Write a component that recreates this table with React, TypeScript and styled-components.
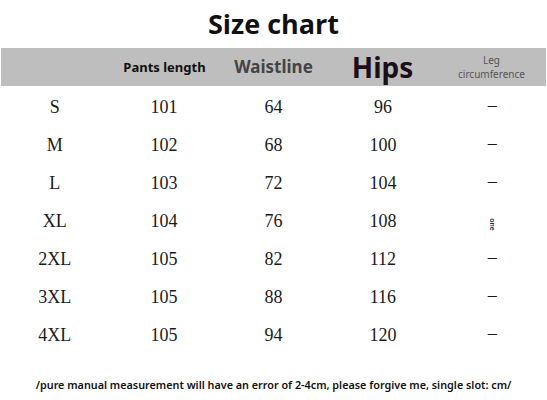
import styled, { createGlobalStyle } from 'styled-components'

const GlobalStyle = createGlobalStyle`
  html, body {
    margin: 0;
    padding: 0;
    background: #fff;
  }
`

const sizes = [
  { size: 'S', pants: 101, waist: 64, hips: 96, leg: '–' },
  { size: 'M', pants: 102, waist: 68, hips: 100, leg: '–' },
  { size: 'L', pants: 103, waist: 72, hips: 104, leg: '–' },
  { size: 'XL', pants: 104, waist: 76, hips: 108, leg: 'one' },
  { size: '2XL', pants: 105, waist: 82, hips: 112, leg: '–' },
  { size: '3XL', pants: 105, waist: 88, hips: 116, leg: '–' },
  { size: '4XL', pants: 105, waist: 94, hips: 120, leg: '–' }
]

export default function App() {
  return (
    <Page>
      <GlobalStyle />
      <Title>Size chart</Title>
      <HeaderBar>
        <HeadCell />
        <HeadCell $size={13} $color="#111">Pants length</HeadCell>
        <HeadCell $size={17} $color="#444">Waistline</HeadCell>
        <HeadCell $size={28} $color="#1c0f17">Hips</HeadCell>
        <HeadCell $size={10} $color="#555" $weight={400} $lh={1.45}>
          Leg
          <br />
          circumference
        </HeadCell>
      </HeaderBar>
      <Body>
        {sizes.map((row) => (
          <Row key={row.size}>
            <Cell>{row.size}</Cell>
            <Cell>{row.pants}</Cell>
            <Cell>{row.waist}</Cell>
            <Cell>{row.hips}</Cell>
            <Cell>{row.leg === 'one' ? <Sideways>one</Sideways> : <Dash>{row.leg}</Dash>}</Cell>
          </Row>
        ))}
      </Body>
      <Note>/pure manual measurement will have an error of 2-4cm, please forgive me, single slot: cm/</Note>
    </Page>
  )
}

const Page = styled.div`
  width: 547px;
  height: 400px;
  overflow: hidden;
  display: flex;
  flex-direction: column;
  background: #fff;
`
const Title = styled.div`
  height: 48px;
  display: flex;
  align-items: center;
  justify-content: center;
  font-family: 'Open Sans', 'Noto Sans', sans-serif;
  font-weight: 700;
  font-size: 27px;
  color: #111;
  padding-bottom: 2px;
  box-sizing: border-box;
`
const HeaderBar = styled.div`
  display: grid;
  grid-template-columns: repeat(5, 1fr);
  height: 38px;
  margin: 0 1px;
  background: #bebebe;
`
const HeadCell = styled.div<{ $size?: number; $color?: string; $weight?: number; $lh?: number }>`
  display: flex;
  align-items: center;
  justify-content: center;
  text-align: center;
  font-family: 'Noto Sans', 'Open Sans', sans-serif;
  font-weight: ${(p) => p.$weight ?? 700};
  font-size: ${(p) => p.$size ?? 13}px;
  line-height: ${(p) => p.$lh ?? 1.15};
  color: ${(p) => p.$color ?? '#111'};
`
const Body = styled.div`
  display: flex;
  flex-direction: column;
  padding-top: 2px;
`
const Row = styled.div`
  display: grid;
  grid-template-columns: repeat(5, 1fr);
  height: 38px;
  align-items: center;
`
const Cell = styled.div`
  text-align: center;
  font-family: 'Liberation Serif', serif;
  font-size: 18px;
  color: #1a1a1a;
`
const Dash = styled.span`
  display: inline-block;
  transform: translateY(-2px);
`
const Sideways = styled.span`
  display: inline-block;
  font-family: 'Liberation Sans', sans-serif;
  font-size: 7px;
  font-weight: 700;
  transform: rotate(90deg);
  color: #333;
`
const Note = styled.div`
  margin-top: 23px;
  text-align: center;
  font-family: 'Noto Sans', 'Open Sans', sans-serif;
  font-weight: 600;
  font-size: 10.8px;
  color: #111;
`
